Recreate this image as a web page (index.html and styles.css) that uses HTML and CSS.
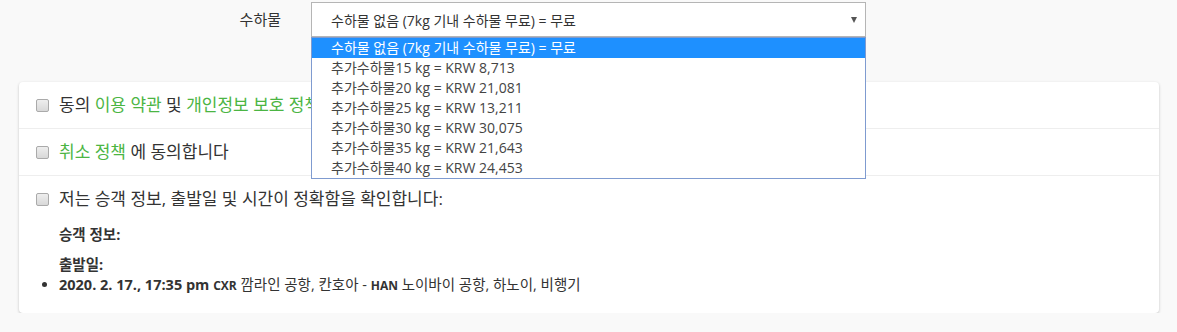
FILE: index.html
```
<!DOCTYPE html>
<html>

<head>
  <title>수하물 선택</title>
  <link rel="stylesheet" href="styles.css">
</head>

<body>
  <div class="baggage-row">
    <p class="baggage-label">수하물</p>
    <div class="select-wrap">
      <div class="select-box">
        <span>수하물 없음 (7kg 기내 수하물 무료) = 무료</span>
        <span class="select-arrow"></span>
      </div>
      <ul class="select-list">
        <li class="select-item selected">수하물 없음 (7kg 기내 수하물 무료) = 무료</li>
        <li class="select-item">추가수하물15 kg = KRW 8,713</li>
        <li class="select-item">추가수하물20 kg = KRW 21,081</li>
        <li class="select-item">추가수하물25 kg = KRW 13,211</li>
        <li class="select-item">추가수하물30 kg = KRW 30,075</li>
        <li class="select-item">추가수하물35 kg = KRW 21,643</li>
        <li class="select-item">추가수하물40 kg = KRW 24,453</li>
      </ul>
    </div>
  </div>

  <div class="card">
    <div class="card-row">
      <label class="check-line">
        <span class="check"></span>
        <span>동의 <a class="link">이용 약관</a> 및 <a class="link">개인정보 보호 정책</a> 에 동의합니다</span>
      </label>
    </div>

    <div class="card-row">
      <label class="check-line">
        <span class="check"></span>
        <span><a class="link">취소 정책</a> 에 동의합니다</span>
      </label>
    </div>

    <div class="card-row last-row">
      <label class="check-line">
        <span class="check"></span>
        <span>저는 승객 정보, 출발일 및 시간이 정확함을 확인합니다:</span>
      </label>
      <p class="info-title passengers">승객 정보:</p>
      <p class="info-title">출발일:</p>
      <ul class="trip-list">
        <li><b>2020. 2. 17., 17:35 pm</b> <b class="code">CXR</b> 깜라인 공항, 칸호아 - <b class="code">HAN</b> 노이바이 공항, 하노이, 비행기</li>
      </ul>
    </div>
  </div>
</body>

</html>
```

FILE: styles.css
```
body{
    margin: 0;
    background-color: #f9f9f9;
    color: #333;
    font-family: "Open Sans", "Noto Sans CJK KR", sans-serif;
    font-size: 14px;
}
.baggage-row{
    display: flex;
    align-items: flex-start;
    padding-top: 2px;
}
.baggage-label{
    width: 281px;
    margin: 0 30px 0 0;
    text-align: right;
    font-size: 15px;
    line-height: 35px;
}
.select-wrap{
    position: relative;
    width: 555px;
}
.select-box{
    display: flex;
    justify-content: space-between;
    align-items: center;
    height: 33px;
    padding: 0 8px 0 19px;
    background-color: white;
    border: 1px solid #b5b5b5;
}
.select-arrow{
    width: 0;
    height: 0;
    border-left: 3px solid transparent;
    border-right: 3px solid transparent;
    border-top: 6px solid #555;
}
.select-list{
    position: absolute;
    top: 35px;
    left: 0;
    right: 0;
    z-index: 2;
    margin: 0;
    padding: 0;
    list-style: none;
    background-color: white;
    border: 1px solid #7f9bd0;
}
.select-item{
    height: 20px;
    line-height: 20px;
    padding-left: 19px;
    color: #444;
}
.select-item.selected{
    background-color: #1e90ff;
    color: white;
}
.card{
    margin: 45px 18px 0 19px;
    background-color: white;
    border-radius: 4px;
    box-shadow: 0 1px 3px rgba(0, 0, 0, 0.22);
}
.card-row{
    padding: 13px 17px;
    border-bottom: 1px solid #eee;
}
.last-row{
    border-bottom: none;
    padding-bottom: 17px;
}
.check-line{
    display: flex;
    align-items: center;
    gap: 10px;
    font-size: 17px;
    line-height: 20px;
}
.check{
    flex-shrink: 0;
    width: 11px;
    height: 11px;
    border: 1px solid #aaa;
    border-radius: 2px;
    background: linear-gradient(#eee, #d8d8d8);
}
.link{
    color: #4bb543;
}
.info-title{
    margin: 10px 0 0 23px;
    font-size: 14.5px;
    font-weight: bold;
    line-height: 20px;
}
.passengers{
    margin-top: 16px;
}
.trip-list{
    margin: 0;
    padding-left: 23px;
    font-size: 14.5px;
    line-height: 20px;
}
.code{
    font-size: 12px;
}
```
